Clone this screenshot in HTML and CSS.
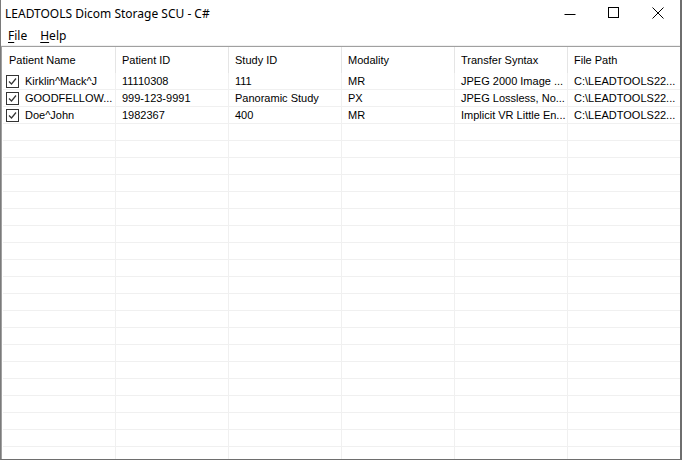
FILE: index.html
```html
<!DOCTYPE html>
<html>
<head>
<meta charset="utf-8">
<link rel="stylesheet" href="styles.css">
</head>
<body>
<div class="window">
  <div class="titlebar">
    <div class="title">LEADTOOLS Dicom Storage SCU - C#</div>
    <div class="caption">
      <div class="cbtn"><svg width="12" height="12" viewBox="0 0 12 12"><path d="M0.5 7.5H11.5" stroke="#000" stroke-width="1"/></svg></div>
      <div class="cbtn"><svg width="12" height="12" viewBox="0 0 12 12"><rect x="0.5" y="0.5" width="10" height="10" fill="none" stroke="#000" stroke-width="1"/></svg></div>
      <div class="cbtn"><svg width="12" height="12" viewBox="0 0 12 12"><path d="M0.5 0.5L11.5 11.5M11.5 0.5L0.5 11.5" stroke="#000" stroke-width="1"/></svg></div>
    </div>
  </div>
  <div class="menubar">
    <span class="menu"><u>F</u>ile</span>
    <span class="menu"><u>H</u>elp</span>
  </div>
  <div class="list">
    <div class="row header">
      <div class="cell">Patient Name</div>
      <div class="cell">Patient ID</div>
      <div class="cell">Study ID</div>
      <div class="cell">Modality</div>
      <div class="cell">Transfer Syntax</div>
      <div class="cell">File Path</div>
    </div>
    <div class="row">
      <div class="cell first"><span class="chk"><svg width="13" height="13" viewBox="0 0 13 13"><rect x="0.5" y="0.5" width="12" height="12" fill="#fff" stroke="#333"/><path d="M3 6.5L5.5 9L10 3.5" fill="none" stroke="#333" stroke-width="1.2"/></svg></span>Kirklin^Mack^J</div>
      <div class="cell">11110308</div>
      <div class="cell">111</div>
      <div class="cell">MR</div>
      <div class="cell">JPEG 2000 Image ...</div>
      <div class="cell">C:\LEADTOOLS22...</div>
    </div>
    <div class="row">
      <div class="cell first"><span class="chk"><svg width="13" height="13" viewBox="0 0 13 13"><rect x="0.5" y="0.5" width="12" height="12" fill="#fff" stroke="#333"/><path d="M3 6.5L5.5 9L10 3.5" fill="none" stroke="#333" stroke-width="1.2"/></svg></span>GOODFELLOW...</div>
      <div class="cell">999-123-9991</div>
      <div class="cell">Panoramic Study</div>
      <div class="cell">PX</div>
      <div class="cell">JPEG Lossless, No...</div>
      <div class="cell">C:\LEADTOOLS22...</div>
    </div>
    <div class="row">
      <div class="cell first"><span class="chk"><svg width="13" height="13" viewBox="0 0 13 13"><rect x="0.5" y="0.5" width="12" height="12" fill="#fff" stroke="#333"/><path d="M3 6.5L5.5 9L10 3.5" fill="none" stroke="#333" stroke-width="1.2"/></svg></span>Doe^John</div>
      <div class="cell">1982367</div>
      <div class="cell">400</div>
      <div class="cell">MR</div>
      <div class="cell">Implicit VR Little En...</div>
      <div class="cell">C:\LEADTOOLS22...</div>
    </div>
    <div class="row"><div class="cell"></div><div class="cell"></div><div class="cell"></div><div class="cell"></div><div class="cell"></div><div class="cell"></div></div>
    <div class="row"><div class="cell"></div><div class="cell"></div><div class="cell"></div><div class="cell"></div><div class="cell"></div><div class="cell"></div></div>
    <div class="row"><div class="cell"></div><div class="cell"></div><div class="cell"></div><div class="cell"></div><div class="cell"></div><div class="cell"></div></div>
    <div class="row"><div class="cell"></div><div class="cell"></div><div class="cell"></div><div class="cell"></div><div class="cell"></div><div class="cell"></div></div>
    <div class="row"><div class="cell"></div><div class="cell"></div><div class="cell"></div><div class="cell"></div><div class="cell"></div><div class="cell"></div></div>
    <div class="row"><div class="cell"></div><div class="cell"></div><div class="cell"></div><div class="cell"></div><div class="cell"></div><div class="cell"></div></div>
    <div class="row"><div class="cell"></div><div class="cell"></div><div class="cell"></div><div class="cell"></div><div class="cell"></div><div class="cell"></div></div>
    <div class="row"><div class="cell"></div><div class="cell"></div><div class="cell"></div><div class="cell"></div><div class="cell"></div><div class="cell"></div></div>
    <div class="row"><div class="cell"></div><div class="cell"></div><div class="cell"></div><div class="cell"></div><div class="cell"></div><div class="cell"></div></div>
    <div class="row"><div class="cell"></div><div class="cell"></div><div class="cell"></div><div class="cell"></div><div class="cell"></div><div class="cell"></div></div>
    <div class="row"><div class="cell"></div><div class="cell"></div><div class="cell"></div><div class="cell"></div><div class="cell"></div><div class="cell"></div></div>
    <div class="row"><div class="cell"></div><div class="cell"></div><div class="cell"></div><div class="cell"></div><div class="cell"></div><div class="cell"></div></div>
    <div class="row"><div class="cell"></div><div class="cell"></div><div class="cell"></div><div class="cell"></div><div class="cell"></div><div class="cell"></div></div>
    <div class="row"><div class="cell"></div><div class="cell"></div><div class="cell"></div><div class="cell"></div><div class="cell"></div><div class="cell"></div></div>
    <div class="row"><div class="cell"></div><div class="cell"></div><div class="cell"></div><div class="cell"></div><div class="cell"></div><div class="cell"></div></div>
    <div class="row"><div class="cell"></div><div class="cell"></div><div class="cell"></div><div class="cell"></div><div class="cell"></div><div class="cell"></div></div>
    <div class="row"><div class="cell"></div><div class="cell"></div><div class="cell"></div><div class="cell"></div><div class="cell"></div><div class="cell"></div></div>
    <div class="row"><div class="cell"></div><div class="cell"></div><div class="cell"></div><div class="cell"></div><div class="cell"></div><div class="cell"></div></div>
    <div class="row"><div class="cell"></div><div class="cell"></div><div class="cell"></div><div class="cell"></div><div class="cell"></div><div class="cell"></div></div>
    <div class="row"><div class="cell"></div><div class="cell"></div><div class="cell"></div><div class="cell"></div><div class="cell"></div><div class="cell"></div></div>
  </div>
</div>
</body>
</html>
```
FILE: styles.css
```css
html, body {
  margin: 0;
  padding: 0;
  background: #fff;
}
.window {
  width: 682px;
  height: 460px;
  box-sizing: border-box;
  border-left: 1px solid #7a7a7a;
  border-right: 2px solid #6e6e6e;
  border-bottom: 1px solid #6e6e6e;
  display: flex;
  flex-direction: column;
  overflow: hidden;
  font-family: "Liberation Sans", Arial, sans-serif;
  color: #000;
}
.titlebar {
  height: 26px;
  flex: none;
  display: flex;
  align-items: center;
  justify-content: space-between;
}
.title {
  font-family: "Noto Sans", "Open Sans", sans-serif;
  font-size: 12px;
  padding-left: 4px;
  padding-top: 1px;
}
.caption {
  display: flex;
  align-self: stretch;
}
.cbtn {
  width: 44px;
  display: flex;
  align-items: center;
  justify-content: center;
}
.cbtn svg { display: block; }
.menubar {
  height: 19px;
  flex: none;
  display: flex;
  align-items: center;
  gap: 13px;
  padding-left: 7px;
  font-family: "Noto Sans", "Open Sans", sans-serif;
  font-size: 12px;
  border-bottom: 1px solid #f0f0f0;
}
.menu u { text-decoration: underline; text-underline-offset: 2px; }
.list {
  flex: 1;
  border-top: 1px solid #a0a0a0;
  border-left: 1px solid #a0a0a0;
  padding-left: 1px;
  overflow: hidden;
  font-size: 11px;
}
.row {
  display: flex;
  height: 17px;
  box-sizing: border-box;
  border-bottom: 1px solid #f0f0f0;
}
.row.header {
  height: 26px;
  border-bottom: none;
}
.cell {
  width: 113px;
  flex: none;
  box-sizing: border-box;
  border-right: 1px solid #f0f0f0;
  padding-left: 6px;
  white-space: nowrap;
  overflow: hidden;
  display: flex;
  align-items: center;
  line-height: 16px;
}
.header .cell {
  border-right: 1px solid #e5e5e5;
  padding-left: 6px;
  line-height: 26px;
}
.cell.first {
  padding-left: 3px;
}
.chk {
  width: 13px;
  height: 13px;
  margin-right: 6px;
  flex: none;
}
.chk svg { display: block; }
```
